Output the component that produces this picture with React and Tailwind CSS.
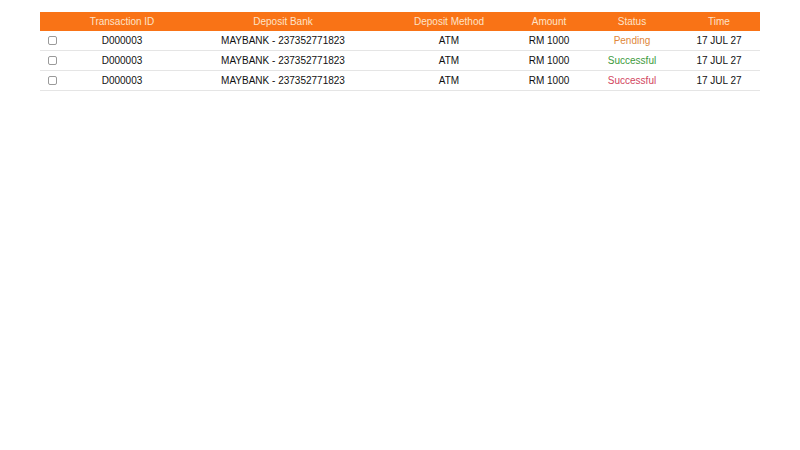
import React from 'react';

const rows = [
  { id: 'D000003', bank: 'MAYBANK - 237352771823', method: 'ATM', amount: 'RM 1000', status: 'Pending', time: '17 JUL 27' },
  { id: 'D000003', bank: 'MAYBANK - 237352771823', method: 'ATM', amount: 'RM 1000', status: 'Successful', time: '17 JUL 27' },
  { id: 'D000003', bank: 'MAYBANK - 237352771823', method: 'ATM', amount: 'RM 1000', status: 'Failed', time: '17 JUL 27' },
];

const statusColor = {
  Pending: 'text-[#e0873a]',
  Successful: 'text-[#3c9a3c]',
  Failed: 'text-[#d2455e]',
};

const cols = 'grid grid-cols-[24px_116px_206px_126px_74px_92px_82px] items-center text-center';

export default function App() {
  return (
    <div className="min-h-[450px] w-[800px] bg-white pt-3 px-10 font-['Liberation_Sans',Arial,sans-serif] text-[10px]">
      {/* header */}
      <div className={`${cols} h-[19px] bg-[#f97316] text-[#fde3c9]`}>
        <div />
        <div>Transaction ID</div>
        <div>Deposit Bank</div>
        <div>Deposit Method</div>
        <div>Amount</div>
        <div>Status</div>
        <div>Time</div>
      </div>

      {rows.map((r, i) => (
        <div key={i} className={`${cols} h-[20px] border-b border-[#e5e5e5] text-[#111]`}>
          <div className="flex justify-center">
            <span className="block h-[9px] w-[9px] rounded-[2px] border border-[#9a9a9a] bg-white" />
          </div>
          <div>{r.id}</div>
          <div>{r.bank}</div>
          <div>{r.method}</div>
          <div>{r.amount}</div>
          {/* third row shows "Successful" in red in the design */}
          <div className={statusColor[r.status]}>{r.status === 'Failed' ? 'Successful' : r.status}</div>
          <div>{r.time}</div>
        </div>
      ))}
    </div>
  );
}
